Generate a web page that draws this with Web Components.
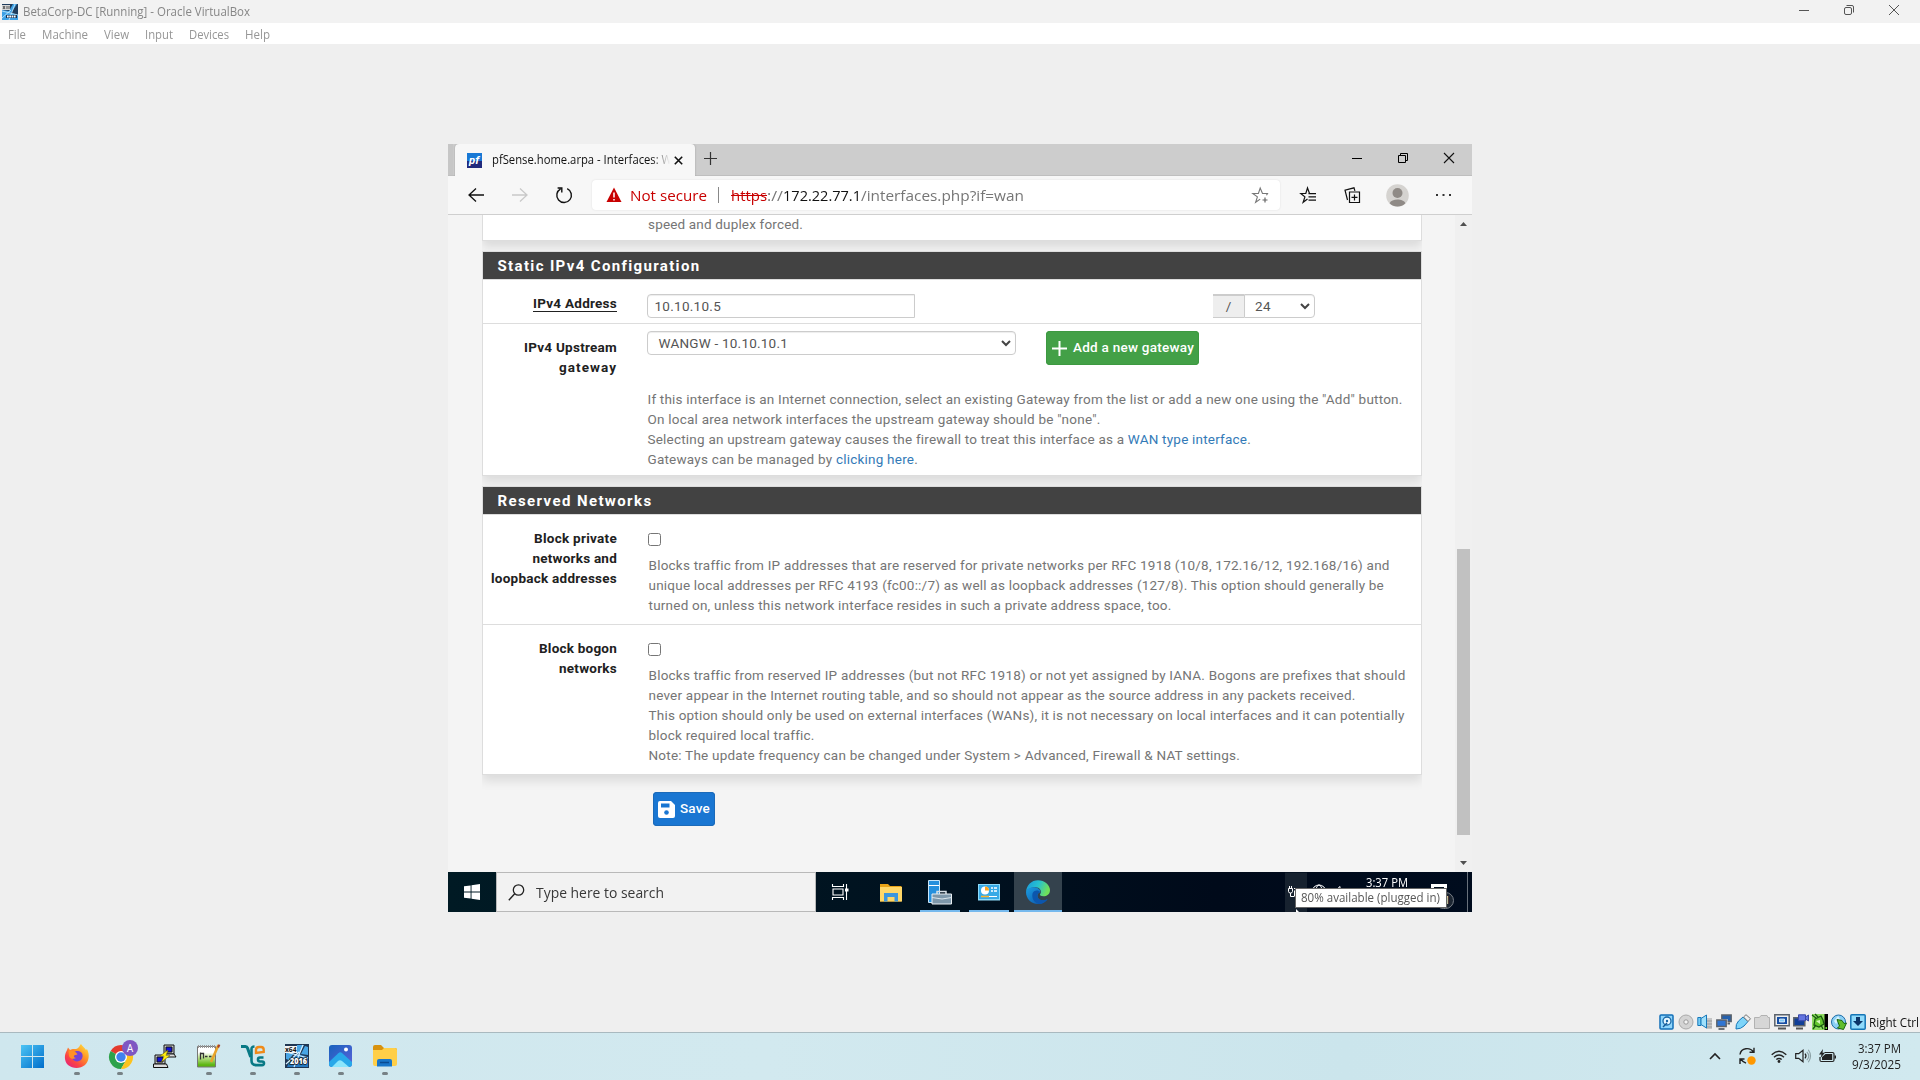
<!DOCTYPE html>
<html lang="en">
<head>
<meta charset="utf-8">
<title>BetaCorp-DC [Running] - Oracle VirtualBox</title>
<style>
html,body{margin:0;width:1920px;height:1080px;overflow:hidden;background:#efefef}
body{display:flex;flex-direction:column;font-family:"Open Sans","Noto Sans",sans-serif}
</style>
</head>
<body>
<vm-titlebar></vm-titlebar>
<vm-menubar></vm-menubar>
<vm-screen>
  <edge-window>
    <config-panel tail>
      <fit-text w="155">speed and duplex forced.</fit-text>
    </config-panel>
    <config-panel heading="Static IPv4 Configuration" hw="203">
      <form-row style="height:43px" divider>
        <fit-text slot="label" w="84" class="u">IPv4 Address</fit-text>
        <address-field></address-field>
      </form-row>
      <form-row style="height:151px">
        <fit-text slot="label" w="93">IPv4 Upstream</fit-text>
        <fit-text slot="label" w="58">gateway</fit-text>
        <gateway-field></gateway-field>
        <help-text>
          <fit-text w="755">If this interface is an Internet connection, select an existing Gateway from the list or add a new one using the "Add" button.</fit-text>
          <fit-text w="453">On local area network interfaces the upstream gateway should be "none".</fit-text>
          <fit-text w="603">Selecting an upstream gateway causes the firewall to treat this interface as a <a>WAN type interface</a>.</fit-text>
          <fit-text w="270.5">Gateways can be managed by <a>clicking here</a>.</fit-text>
        </help-text>
      </form-row>
    </config-panel>
    <config-panel heading="Reserved Networks" hw="155">
      <form-row style="height:109px" divider>
        <fit-text slot="label" w="83">Block private</fit-text>
        <fit-text slot="label" w="84.5">networks and</fit-text>
        <fit-text slot="label" w="126">loopback addresses</fit-text>
        <check-field></check-field>
        <help-text tight>
          <fit-text w="740">Blocks traffic from IP addresses that are reserved for private networks per RFC 1918 (10/8, 172.16/12, 192.168/16) and</fit-text>
          <fit-text w="735.5">unique local addresses per RFC 4193 (fc00::/7) as well as loopback addresses (127/8). This option should generally be</fit-text>
          <fit-text w="523">turned on, unless this network interface resides in such a private address space, too.</fit-text>
        </help-text>
      </form-row>
      <form-row style="height:149px">
        <fit-text slot="label" w="78">Block bogon</fit-text>
        <fit-text slot="label" w="58">networks</fit-text>
        <check-field></check-field>
        <help-text tight>
          <fit-text w="755.5">Blocks traffic from reserved IP addresses (but not RFC 1918) or not yet assigned by IANA. Bogons are prefixes that should</fit-text>
          <fit-text w="707">never appear in the Internet routing table, and so should not appear as the source address in any packets received.</fit-text>
          <fit-text w="756">This option should only be used on external interfaces (WANs), it is not necessary on local interfaces and it can potentially</fit-text>
          <fit-text w="165">block required local traffic.</fit-text>
          <fit-text w="591.5">Note: The update frequency can be changed under System &gt; Advanced, Firewall &amp; NAT settings.</fit-text>
        </help-text>
      </form-row>
    </config-panel>
    <action-button kind="save" icon="save" tw="30">Save</action-button>
  </edge-window>
  <guest-taskbar></guest-taskbar>
</vm-screen>
<vm-statusbar></vm-statusbar>
<host-taskbar></host-taskbar>

<script>
const define = (name, css, html, extra) => {
  customElements.define(name, class extends HTMLElement {
    constructor() {
      super();
      const t = document.createElement('template');
      t.innerHTML = '<style>*,:host{box-sizing:border-box}' + css + '</style>' + (typeof html === 'function' ? html(this) : html);
      this.attachShadow({mode: 'open'}).append(t.content.cloneNode(true));
    }
    connectedCallback() { if (extra) extra(this); }
  });
};

/* name: [viewBox width, viewBox height, markup] */
const ICONS = {
  min: [12,12,'<path d="M1 6.500h10" stroke="#555" fill="none"/>'],
  restore: [12,12,'<g stroke="#555" fill="none"><rect x="1.500" y="3.500" width="7" height="7" rx="1.500"/><path d="M3.500 1.500h5.500q1.500 0 1.500 1.500v5.500"/></g>'],
  close: [12,12,'<path d="M1 1l10 10M11 1L1 11" stroke="#555" fill="none"/>'],
  gmin: [12,12,'<path d="M1 6.500h10" stroke="#000"/>'],
  grestore: [12,12,'<g stroke="#000" fill="none"><path d="M1.500 3.500h7v7h-7zM3.500 3V1.500h7v7H9"/></g>'],
  gclose: [12,12,'<path d="M1 1l10 10M11 1L1 11" stroke="#111" stroke-width="1.100"/>'],
  tabx: [9,9,'<path d="M.8.8l7.400 7.400M8.200.8L.8 8.200" stroke="#111" stroke-width="1.600"/>'],
  plusthin: [13,13,'<path d="M6.500 0v13M0 6.500h13" stroke="#333" stroke-width="1.200"/>'],
  back: [18,16,'<path d="M9 1.500L2 8l7 6.500M2 8H17" fill="none" stroke="#111" stroke-width="1.300"/>'],
  fwd: [18,16,'<path d="M9 1.500L16 8l-7 6.500M16 8H1" fill="none" stroke="#c9c9c9" stroke-width="1.300"/>'],
  reload: [18,18,'<path d="M12.200 2.600a7.300 7.300 0 1 1-6.600.2M2.600 2h4.200v4.400" fill="none" stroke="#111" stroke-width="1.400"/>'],
  warn: [16,16,'<path d="M8 .5L15.500 15H.5z" fill="#c80000"/><path d="M8 5.500v5M8 12v1.600" stroke="#fff" stroke-width="1.500"/>'],
  staradd: [17,17,'<path d="M14.500 8.200l1-1.700h-5L8.200 1 6.400 6.500H.8l4.600 3.400-1.800 5.400 4.600-3.200" fill="none" stroke="#777" stroke-width="1.100"/><path d="M13 10.500v5M10.500 13h5" stroke="#666" stroke-width="1.200"/>'],
  starlist: [17,17,'<path d="M10 6.500H9.500L7.500 1 5.800 6.500H.8l4.100 3.400-1.800 5.400 4.400-3.200" fill="none" stroke="#111" stroke-width="1.200"/><path d="M8.500 6.700H16M8.500 9.900H16M8.500 13.100H16" stroke="#111" stroke-width="1.300"/>'],
  collect: [17,17,'<path d="M3.500 13L1 3.200 10 .8l.9 3" fill="none" stroke="#111" stroke-width="1.200"/><path d="M5.500 5h10v10.500h-10zM10.500 7.500v6M7.500 10.300h6" fill="none" stroke="#111" stroke-width="1.200"/>'],
  avatar: [23,23,'<circle cx="11.500" cy="11.500" r="11.300" fill="#d5d3d0"/><circle cx="11.500" cy="9" r="5" fill="#8f8a86"/><path d="M3.600 19.200c2-5 13.800-5 15.800 0a11.300 11.300 0 0 1-15.800 0z" fill="#8f8a86"/>'],
  dots: [15,4,'<path d="M0 1h2v2H0zM6.500 1h2v2h-2zM13 1h2v2h-2z" fill="#333"/>'],
  chev: [10,7,'<path d="M1 1l4 4 4-4" fill="none" stroke="#444" stroke-width="2"/>'],
  plus: [15,15,'<path d="M7.500 0v15M0 7.500h15" stroke="#fff" stroke-width="2"/>'],
  save: [17,17,'<path fill="#fff" d="M2 0h11l4 4v11q0 2-2 2H2q-2 0-2-2V2Q0 0 2 0z"/><path fill="#1976d2" d="M3 2.500h8.500V6.500H3z"/><circle cx="8.500" cy="11.500" r="2.300" fill="#1976d2"/>'],
  gstart: [16,16,'<path fill="#fff" d="M0 2.300L6.600 1.400V7.600H0zM7.500 1.300L16 0v7.600H7.500zM0 8.400h6.600v6.200L0 13.700zM7.500 8.400H16V16l-8.500-1.300z"/>'],
  search: [17,17,'<circle cx="10.500" cy="6" r="5.200" fill="none" stroke="#222" stroke-width="1.300"/><path d="M6.700 9.800L.8 16.200" stroke="#222" stroke-width="1.400"/>'],
  taskview: [17,16,'<path d="M.5 0v2.500h11V0M.5 16v-2.500h11V16M1 5h10v6H1zM14.500 0v16" fill="none" stroke="#fff" stroke-width="1.100"/><path d="M13 4.500h3.500v3H13z" fill="#fff"/>'],
  folder: [22,19,'<path d="M0 1h8l2 2h11.500v15.500H0z" fill="#e8a317"/><path d="M0 4h22v14.500H0z" fill="#ffd768"/><path d="M4 18.500V10h14v8.500h-3.500V14H7.500v4.500z" fill="#3c96dd"/>'],
  server: [24,25,'<path d="M.5.500h11v22H.5z" fill="#2590dd" stroke="#c8e6fa"/><path d="M1 5.500h10" stroke="#fff"/><path d="M9 14V11.500h9V14" fill="none" stroke="#d6dee5" stroke-width="1.500"/><path d="M4 14h19.500v10H4z" fill="#7e98ab" stroke="#e8eef2"/><path d="M4 17.500l10 1.500 9.500-1.500" fill="none" stroke="#dce6ec"/>'],
  cpanel: [22,17,'<path d="M0 0h22v16.500H0z" fill="#8ddaf8"/><path d="M1 1h20v14H1z" fill="#38aae6"/><circle cx="7" cy="6.500" r="4" fill="#fff"/><path d="M7 6.500V2.500a4 4 0 0 1 4 4z" fill="#ffa51f"/><path d="M13 4h2M16 4h3M13 7h2M16 7h3" stroke="#fff" stroke-width="1.500"/><path d="M3 12.500h16" stroke="#fff"/><path d="M3 12.500h8" stroke="#ffb52c" stroke-width="1.500"/>'],
  edge: [24,24,'<defs><linearGradient id="a" x1="0" y1="0" x2="1" y2=".3"><stop offset="0" stop-color="#1897df"/><stop offset=".55" stop-color="#27c2cf"/><stop offset="1" stop-color="#6fe05a"/></linearGradient><linearGradient id="b" x1="0" y1="0" x2="1" y2="1"><stop offset="0" stop-color="#1b9de2"/><stop offset="1" stop-color="#0b4fa5"/></linearGradient></defs><path d="M0 12C.5 5 5.500.2 12 .2S24 5 24 10c0 4.500-3.500 6.300-6.500 6.300-3 0-4.200-1-3.300-2.200 2.300-3.300-.9-6.900-4.500-6.900C5 7.200 1 9 0 12z" fill="url(#a)"/><path d="M0 12c.5-3 4-5 8.500-4.800 3.300.2 6.500 2.500 5.800 5-2 .3-3.200 2-2.800 4.200.8 3.800 5.700 5 10 2.800A12 12 0 0 1 12 24C5 24 0 18.500 0 12z" fill="url(#b)"/><path d="M6.500 13.500C5.500 18 8 22.500 12.500 24c4 .2 7.500-2 9.200-5-4 2.300-9.400 1.300-10.200-2.600-.4-2.200.8-3.900 2.800-4.200-2.500-2.800-6.800-1.700-7.800 1.300z" fill="#0c56ad"/>'],
  plug: [14,14,'<path d="M2.500 1v2.500M4.500 1v2.500M1.500 3.500h4v3q0 1.500-2 1.500t-2-1.500zM3.500 8v3.500H7M7 3.500h6" fill="none" stroke="#fff"/><path d="M7 5.500h6.500v6H7z" fill="#fff"/>'],
  globe: [16,16,'<g fill="none" stroke="#fff"><circle cx="8" cy="8" r="7"/><ellipse cx="8" cy="8" rx="3.200" ry="7"/><path d="M1.500 5.500h13M1.500 10.500h13"/></g>'],
  gvol: [14,14,'<path d="M1 5h3l4-3.500v11L4 9H1z" fill="none" stroke="#fff"/>'],
  note: [16,16,'<path d="M0 0h16v13h-5v3l-3-3H0z" fill="#fff"/><path d="M3 3.500h10M3 6h10" stroke="#031020"/>'],
  win11: [23,23,'<defs><linearGradient id="w" x1="0" y1="0" x2="1" y2="1"><stop offset="0" stop-color="#4cc4f4"/><stop offset="1" stop-color="#006ecb"/></linearGradient></defs><path fill="url(#w)" d="M0 0h11v11H0zM12 0h11v11H12zM0 12h11v11H0zM12 12h11v11H12z"/>'],
  firefox: [24,24,'<defs><linearGradient id="f" x1="1" y1="0" x2=".2" y2="1"><stop offset="0" stop-color="#fff04a"/><stop offset=".4" stop-color="#ff9a25"/><stop offset=".75" stop-color="#fb4444"/><stop offset="1" stop-color="#e5237c"/></linearGradient></defs><path d="M16 0c1 2 4 4 5 6l1-1c3 6 2 12-2 16-5 4-12 4-17 0C-1 17-.8 11 1.800 6.500L3 3.500l2 2.500C7 4.800 8.300 5 9.500 5c1 .2 3-.2 4-1.500C14.500 2.500 15 1 16 0z" fill="url(#f)"/><path d="M7 12c0-3 3-5.500 6-5 3.500.3 5 3 4.500 6-.6 3-3 4.500-5.500 4.400-3 0-5-2-5-5.400z" fill="#7543d5"/><path d="M3.500 6.500C7 5.500 9 7 11 8.500l1.500 1.700c-1 .8-3 .6-3.500 1.500-.5 1.200.5 2.300 2 2.300-2 1.500-6 1-7-2z" fill="#ff9026"/>'],
  chrome: [29,29,'<circle cx="12" cy="17" r="12" fill="#e6e6e6"/><path d="M12 17L1.600 11A12 12 0 0 1 22.400 11H12z" fill="#e33b2e"/><path d="M12 17L1.600 11A12 12 0 0 0 12 29l5.200-9z" fill="#2da24c"/><path d="M12 11h10.400A12 12 0 0 1 12 29l5.200-9z" fill="#fcc31e"/><circle cx="12" cy="17" r="6" fill="#fff"/><circle cx="12" cy="17" r="4.700" fill="#3f82ee"/><circle cx="21" cy="8" r="8" fill="#7e57c2"/><text x="21" y="11.500" font-size="10" font-family="Roboto" fill="#fff" text-anchor="middle">A</text>'],
  putty: [24,24,'<g stroke="#111" stroke-width="1"><path d="M11 1h10v9H11z" fill="#c9c9c9"/><path d="M13 3h6v5h-6z" fill="#1010d8"/><path d="M10 10h11l2 3H11z" fill="#ddd"/><path d="M2 11h10v9H2z" fill="#c9c9c9"/><path d="M4 13h6v5H4z" fill="#1010d8"/><path d="M.5 20h13l1.500 3.500H.5z" fill="#ddd"/></g><path d="M15 6l-8 6h4l-2.500 6L17 11.500h-4z" fill="#ffee10" stroke="#665f00" stroke-width=".5"/>'],
  npp: [24,24,'<defs><linearGradient id="n" x1="0" y1="0" x2="0" y2="1"><stop offset=".3" stop-color="#fff"/><stop offset=".5" stop-color="#c6e69a"/><stop offset=".9" stop-color="#5cb512"/></linearGradient></defs><path d="M.5 2.500h18v20.500H.5z" fill="url(#n)" stroke="#777"/><path d="M1 2.500h17" stroke="#999" stroke-width="3" stroke-dasharray="1 1"/><path d="M3.500 8.500v7M3.500 9.500h3v5M8 12.500h2.500M12 12.500h2.500" stroke="#333" stroke-width="1.300" fill="none"/><path d="M21.500 1L14 18" stroke="#e9a42a" stroke-width="2.600"/><path d="M21.500.2l1.800.8-1.300 3-2-1z" fill="#a8432c"/>'],
  vbapp: [24,22,'<path d="M0 1.500h4.500q1.500 0 2 1.500l3.200 9" fill="none" stroke="#087985" stroke-width="3"/><path d="M22.500 12.500h-3.500q-2 0-2 2t2 2h2q2 0 2 1.800t-2 1.800H15q-4.500 0-4.500-4.500V4q0-2.500 3-2.500" fill="none" stroke="#087985" stroke-width="2.600"/><path d="M15 8V4.800q0-2.800 3-2.800h2q2.700 0 2.700 2.800V7z" fill="none" stroke="#f08a18" stroke-width="2.400"/>'],
  x64: [24,24,'<path d="M0 0h24v24H0z" fill="#1f3652"/><path d="M1 7l8 2-5 7-3-1zM12 1h7l-5 9-4-2zM20 2l3 1v8l-7-1z" fill="#48a5e5"/><path d="M2 23l4-9 8-4 9 3v10z" fill="#2779bf"/><path d="M1 8l22 6M18 1L9 23M1 20L14 8" stroke="#d7f0ff" stroke-width="1.200"/><path d="M0 2h12v7H0z" fill="#f3f3f3"/><text x="0" y="8.200" font-size="7" font-weight="700" font-family="Open Sans" fill="#111" textLength="11.500" lengthAdjust="spacingAndGlyphs">x64</text><text x="5" y="20" font-size="8" font-weight="800" font-family="Open Sans" fill="#fff" stroke="#101820" stroke-width="1.600" paint-order="stroke" textLength="17" lengthAdjust="spacingAndGlyphs">2016</text>'],
  x64s: [16,16,'<path d="M0 0h16v16H0z" fill="#203d5d"/><path d="M0 6l7 1 4-7h4L9 9l7 2v5H0z" fill="#3da0e5"/><path d="M0 7l16 4M13 0L7 16M0 14l9-8" stroke="#c7edff" stroke-width=".8"/><path d="M0 1h8v5H0z" fill="#d7d7d7"/><path d="M1 2l2 3M3 2L1 5M5 2v3M7 2v3" stroke="#333" stroke-width=".8"/><path d="M4 11h11v3H4z" fill="#14304f"/><path d="M5 12.500h9" stroke="#fff" stroke-width="2.200" stroke-dasharray="1.700 .6"/>'],
  photos: [23,22,'<defs><linearGradient id="p" x1="0" y1="0" x2="1" y2="1"><stop offset="0" stop-color="#1762bd"/><stop offset="1" stop-color="#5c62da"/></linearGradient></defs><rect width="23" height="22" rx="3" fill="url(#p)"/><path d="M0 17L9.300 8.200q2-1.700 4 0L23 17v3q-.5 2-3 2H3q-2.500 0-3-2z" fill="#28a8e9"/><path d="M3 22l6-6q2-1.500 4 0l7 6z" fill="#8be6fc"/><circle cx="17" cy="4.500" r="2" fill="#fff"/>'],
  explorer: [24,22,'<path d="M0 2q0-2 2-2h6l3 3h11q2 0 2 2v3H0z" fill="#d8920e"/><path d="M0 5h9l2-2h11q2 0 2 2v14q0 2-2 2H2q-2 0-2-2z" fill="#ffcf48"/><path d="M4 21.500V16q0-2 2-2h11q2 0 2 2v5.500z" fill="#1976c9"/><path d="M7 17.500h9" stroke="#094b91" stroke-width="1.500"/>'],
  caret: [12,8,'<path d="M1 7l5-5 5 5" fill="none" stroke="#222" stroke-width="1.600"/>'],
  sync: [17,18,'<path d="M1 7.500C2 .5 11 0 14.500 5M15 .800V5.300h-4.500M7 16.200Q4 15 1.500 12M1 17v-5h4.500" fill="none" stroke="#222" stroke-width="1.400"/><circle cx="12.500" cy="13.500" r="4.200" fill="#ff9800"/>'],
  wifi: [16,13,'<path d="M.7 4.700Q8-2 15.300 4.700M3 7.200q5-4.500 10 0M5.300 9.600q2.700-2.400 5.400 0" fill="none" stroke="#222" stroke-width="1.400"/><circle cx="8" cy="11.500" r="1.400" fill="#222"/>'],
  vol: [16,14,'<path d="M.7 4.700h3L8 1.200v11.600L3.700 9.300h-3z" fill="none" stroke="#222" stroke-width="1.200"/><path d="M10 4.700q2 2.300 0 4.600" fill="none" stroke="#222" stroke-width="1.200"/><path d="M11.800 2.800q4 4.200 0 8.400M13.300.8q4.500 6.200 0 12.400" fill="none" stroke="#8ca1a6" stroke-width="1.100"/>'],
  batt: [17,14,'<path d="M5.500 3.500h8q1.500 0 1.500 1.500v6q0 1.500-1.500 1.500H2.500Q1 12.500 1 11V8" fill="none" stroke="#222" stroke-width="1.200"/><path d="M6.500 5h6.700v6H3V8z" fill="#222"/><path d="M15.500 6.500H17v3h-1.500zM4 0L0 5.500h2.500L1.500 9 6 3.800H3.500z" fill="#222"/>'],
  hdd: [15,16,'<rect x="1" y="1" width="13" height="14" rx="1" fill="#8fd5fb" stroke="#126fb8" stroke-width="1.500"/><circle cx="8" cy="7" r="4" fill="#e8f8ff" stroke="#1765a5" stroke-width="1.300"/><circle cx="8" cy="7" r="1.200" fill="#1765a5"/><path d="M4 13l4-4" stroke="#145a98" stroke-width="1.500"/>'],
  disc: [16,16,'<circle cx="8" cy="8" r="7" fill="#d4d4d4" stroke="#aaa"/><circle cx="8" cy="8" r="2.200" fill="#f4f4f4" stroke="#999"/>'],
  audio: [16,16,'<path d="M9 4h6v11H9z" fill="#c6c6c6"/><path d="M10 7h5M10 10h5M10 13h5" stroke="#999"/><path d="M.8 3.500h3.200v8H.8z" fill="#75cdf7" stroke="#1878b9"/><path d="M4 4.500L9.500 1v13L4 10.500z" fill="#9fe0fb" stroke="#1878b9"/>'],
  net: [16,16,'<path d="M5.800 1h9.400v6.500H5.800z" fill="#2561ad" stroke="#5b626b" stroke-width="1.400"/><path d="M9 9.500h5" stroke="#5b626b" stroke-width="2"/><path d="M0 5h11.500v8.500H0z" fill="#efefef"/><path d="M.8 6h9.400v6.500H.8z" fill="#2f76d4" stroke="#5b626b" stroke-width="1.400"/><path d="M2.500 15h6" stroke="#5b626b" stroke-width="1.800"/>'],
  usb: [16,16,'<path d="M1 15q-.5-5 2.500-8L8 3l5 4.500-4 4.500q-3 3-8 3z" fill="#7dd4f9" stroke="#1878b9"/><path d="M8.500 3L11 .7l4.500 4L13 7.500z" fill="#eee" stroke="#777"/>'],
  share: [16,16,'<path d="M.5 3.500h5l1.500-2h6l1 2h1.500v11H.5z" fill="#d6d6d6" stroke="#b2b2b2"/>'],
  display: [16,16,'<path d="M.8.8h14.400v11H.8z" fill="#eee" stroke="#5b626b" stroke-width="1.500"/><path d="M3 3h10v7H3z" fill="#154ea4"/><path d="M5.500 5h5v3h-5z" fill="#83cbf6" stroke="#fff" stroke-width=".7"/><path d="M4 14.500h8" stroke="#555" stroke-width="2"/>'],
  record: [16,16,'<path d="M.8 3.800h11v8H.8z" fill="#113f97" stroke="#5b626b" stroke-width="1.500"/><path d="M3 14.500h7" stroke="#555" stroke-width="2"/><path d="M5.500.8h7v6h-7zM12.500 3L15.500 1v6l-3-2z" fill="#6374e0" stroke="#3848a8"/>'],
  cpu: [16,16,'<path d="M0 0h16v16H0z" fill="#8fdc62"/><path d="M0 1l4 3M3 0l3 3M1 15l3-4M11 15l-2-4M3 5l6-3 2 4 1 4-5 3-5-2z" fill="#62c52e" stroke="#16590d" stroke-width="1.300"/><path d="M4 7l4 3V6z" fill="#d8f7bd"/><path d="M12.500 0H16v16h-3.500z" fill="#000"/><path d="M13.500 13h1.500v2h-1.500z" fill="#69df38"/>'],
  mouse: [16,16,'<circle cx="7.500" cy="8" r="7" fill="#8bd0f5" stroke="#1d6ca8"/><path d="M3 7l4-5 2 3-4 5z" fill="#d6f2ff"/><path d="M6 5.500l5 1 2 3 2.500-.5-3 6.500-6-1.500 2-2z" fill="#61bd2e" stroke="#1a6512"/>'],
  hostkey: [16,16,'<rect x=".8" y=".8" width="14.400" height="14.400" rx="1" fill="#8fdafb" stroke="#1475b6" stroke-width="1.500"/><path d="M6 3h4v4h3l-5 5-5-5h3z" fill="#0b3569"/>'],
  up: [7,4,'<path d="M0 4l3.500-4L7 4z" fill="#505050"/>'],
  down: [7,4,'<path d="M0 0l3.500 4L7 0z" fill="#505050"/>'],
  pf: [16,16,'<defs><linearGradient id="k" x1="0" y1="0" x2="0" y2="1"><stop offset=".5" stop-color="#1878d5"/><stop offset=".5" stop-color="#212a7c"/></linearGradient></defs><path d="M0 0h16v16H0z" fill="url(#k)"/><text x="7.500" y="11.500" font-size="12" font-weight="700" font-style="italic" font-family="Roboto" fill="#fff" text-anchor="middle">pf</text>']
};
define('ui-icon', ':host{display:block;flex:none;line-height:0}svg{display:block;overflow:visible}', el => {
  const [w, h, m] = ICONS[el.getAttribute('name')];
  return `<svg width="${el.getAttribute('w') || w}" height="${el.getAttribute('h') || h}" viewBox="0 0 ${w} ${h}">${m}</svg>`;
});

define('vm-titlebar', `:host{display:flex;height:23px;flex:none;background:#f2f2f2;align-items:center;padding:0 20px 0 2px;color:#868686;font-size:12px}
fit-text{margin-left:5px;line-height:22px;height:22px}.c{margin-left:auto;display:flex;gap:33px;height:20px;align-items:center;align-self:flex-start}`,
`<ui-icon name="x64s"></ui-icon><fit-text scale w="227">BetaCorp-DC [Running] - Oracle VirtualBox</fit-text><div class="c"><ui-icon name="min"></ui-icon><ui-icon name="restore"></ui-icon><ui-icon name="close"></ui-icon></div>`);

define('vm-menubar', ':host{display:flex;flex:none;height:21px;background:#fff;color:#969696;font-size:12px;line-height:24px;padding-left:8px;gap:16px}',
'<fit-text scale w="18">File</fit-text><fit-text scale w="46">Machine</fit-text><fit-text scale w="25">View</fit-text><fit-text scale w="28">Input</fit-text><fit-text scale w="40">Devices</fit-text><fit-text scale w="25">Help</fit-text>');

define('vm-screen', ':host{display:flex;flex:none;flex-direction:column;width:1024px;height:768px;margin:100px 0 0 448px;background:#f4f4f4}', '<slot></slot>');

define('edge-window', `:host{display:flex;flex-direction:column;height:728px}
.strip{height:32px;background:#cdcdcd;display:flex;flex:none;padding-left:7px;box-shadow:inset 0 -1px #bfbfbf,inset 5px 0 #c6c6c6;font-size:12px;color:#111}
.tab{width:240px;background:#f7f7f7;border-radius:4px 4px 0 0;display:flex;align-items:center;padding:0 12px;box-shadow:0 0 2px #999;clip-path:inset(0 -2px 0 -2px)}
.tab .t{margin-left:10px;flex:none;width:181px;height:20px;line-height:19px;-webkit-mask:linear-gradient(90deg,#000 160px,transparent 178px);mask:linear-gradient(90deg,#000 160px,transparent 178px)}
.tab ui-icon:last-child{margin-left:1px}
.add{margin:8px 0 0 9px}.wc{margin:8px 17px 0 auto;display:flex;gap:34px}
.bar{height:39px;flex:none;background:#f7f7f7;border-bottom:1px solid #cfcfcf;display:flex;align-items:center;padding-left:19px}
.addr{width:688px;height:30px;margin-left:19px;background:#fff;border-radius:4px;box-shadow:0 0 2px #ddd;display:flex;align-items:center;padding-left:14px;font-size:15px;line-height:29px}
.sep{width:1px;height:16px;background:#888;margin:0 12px 0 11px}
.r{color:#c80000}.g{color:#767676}.k{color:#111}s{color:#c80000}
.view{flex:1;min-height:0;display:flex}
.page{width:1007px;background:#f4f4f4;padding-left:34px;color:#757575;font:13.500px/20px Roboto,sans-serif}
.col{width:940px;height:657px;overflow:hidden;display:flex;flex-direction:column}
.sb{width:17px;background:#f0f0f0;display:flex;flex-direction:column;align-items:center;padding:7px 0}
.th{width:13px;height:286px;background:#c1c1c1;margin:323px 0 26px}`,
`<div class="strip"><div class="tab"><ui-icon name="pf" w="15" h="15"></ui-icon><div class="t"><fit-text scale w="180">pfSense.home.arpa - Interfaces: W</fit-text></div><ui-icon name="tabx"></ui-icon></div><ui-icon class="add" name="plusthin"></ui-icon><div class="wc"><ui-icon name="gmin"></ui-icon><ui-icon name="grestore"></ui-icon><ui-icon name="gclose"></ui-icon></div></div>
<div class="bar"><ui-icon name="back"></ui-icon><ui-icon name="fwd" style="margin-left:26px"></ui-icon><ui-icon name="reload" style="margin-left:26px"></ui-icon>
<div class="addr"><ui-icon name="warn"></ui-icon><fit-text scale w="77" class="r" style="margin-left:8px">Not secure</fit-text><div class="sep"></div><fit-text scale w="36"><s>https</s></fit-text><fit-text scale w="16" class="g">://</fit-text><fit-text scale w="78" class="k">172.22.77.1</fit-text><fit-text scale w="163" class="g">/interfaces.php?if=wan</fit-text><ui-icon name="staradd" style="margin:0 11px 0 auto"></ui-icon></div>
<ui-icon name="starlist" style="margin-left:20px"></ui-icon><ui-icon name="collect" style="margin-left:27px"></ui-icon><ui-icon name="avatar" style="margin-left:25px"></ui-icon><ui-icon name="dots" style="margin-left:27px"></ui-icon></div>
<div class="view"><div class="page"><div class="col"><slot></slot></div></div><div class="sb"><ui-icon name="up"></ui-icon><div class="th"></div><ui-icon name="down"></ui-icon></div></div>`);

define('config-panel', `:host{display:block;flex:none;width:940px;margin-bottom:10px;background:#fff;border:1px solid #ddd;box-shadow:0 6px 10px rgba(0,0,0,.1)}
:host([tail]){height:26px;border-top:0;padding:0 0 0 165px;line-height:19px}
h2{margin:0;height:28px;background:#424242;border-bottom:1px solid #ddd;color:#fff;font:700 15px/28px Roboto,sans-serif;letter-spacing:1px;padding-left:14.500px}`,
el => (el.hasAttribute('heading') ? `<h2><fit-text w="${el.getAttribute('hw')}">${el.getAttribute('heading')}</fit-text></h2>` : '') + '<slot></slot>');

define('form-row', `:host{display:grid;grid-template-columns:134px 1fr;column-gap:30px;box-sizing:content-box;align-items:start}
:host([divider]){border-bottom:1px solid #ddd}
.l{padding-top:13px;display:flex;flex-direction:column;align-items:flex-end;color:#212121;font-weight:700}`,
'<div class="l"><slot name="label"></slot></div><div><slot></slot></div>');

const ctl = '.f{border:1px solid #ccc;height:24px;background:#fff;box-shadow:inset 0 1px 1px rgba(0,0,0,.075);color:#555;line-height:23px;display:flex;align-items:center}';
define('address-field', `:host{display:flex;padding-top:14px}${ctl}.i{width:268px;border-radius:4px 0 0 4px;padding-left:6.500px}
.s{width:31px;margin-left:298px;background:#eee;border-right:0;border-left:0;justify-content:center;box-shadow:inset 0 1px #ccc}.n{width:71px;border-radius:0 4px 4px 0;padding:0 4px 0 10px;justify-content:space-between}`,
'<div class="f i"><fit-text w="66.500">10.10.10.5</fit-text></div><div class="f s">/</div><div class="f n"><fit-text w="16">24</fit-text><ui-icon name="chev"></ui-icon></div>');

define('gateway-field', `:host{display:flex;padding-top:7px}${ctl}.f{width:369px;border-radius:4px;padding:0 4px 0 10.500px;justify-content:space-between;margin-right:30px}`,
'<div class="f"><fit-text w="129.500">WANGW - 10.10.10.1</fit-text><ui-icon name="chev"></ui-icon></div><action-button icon="plus" tw="121">Add a new gateway</action-button>');

define('action-button', `:host{display:inline-flex;align-items:center;flex:none;align-self:flex-start;height:34px;border-radius:4px;padding:0 5px 0 6px;gap:6px;background:#43a047;box-shadow:inset 0 0 0 1px #3d9941;color:#fff;font-weight:500;line-height:31px}
fit-text{height:33px}
:host([kind=save]){background:#1976d2;box-shadow:inset 0 0 0 1px #1b6ab9;margin:7px 0 0 171px;padding:0 5px;gap:5px}`,
el => `<ui-icon name="${el.getAttribute('icon')}"></ui-icon><fit-text w="${el.getAttribute('tw')}"><slot></slot></fit-text>`);

define('help-text', ':host{display:flex;flex-direction:column;padding:24px 0 0 .5px}:host([tight]){padding:9px 0 0 1.5px}::slotted(*){white-space:nowrap}', '<slot></slot>');

define('check-field', ':host{display:block;padding:18px 0 0 1px}i{display:block;width:13px;height:13px;border:1px solid #767676;border-radius:2.500px;background:#fff}', '<i></i>');

define('guest-taskbar', `:host{display:flex;position:relative;height:40px;background:linear-gradient(90deg,#001a24,#00111f 50%,#000a1a 75%,#000c1e);color:#fff;font-size:12px}
.st{width:48px;display:flex;align-items:center;justify-content:center}
.se{width:320px;background:#f2f2f2;border:1px solid #b9b9b9;display:flex;align-items:center;padding-left:11px;gap:11px;color:#383838;font-size:15px;line-height:38px}
.ap{display:flex}.ap div{width:49px;display:flex;align-items:center;justify-content:center;border-bottom:2px solid transparent;padding-top:2px}
.ap .on{border-color:#76b9ed;width:40px;margin:0 5px 0 4px}.ap .act{background:#34424d;border-color:#76b9ed;width:48px}
.tr{margin-left:auto;display:flex;padding-right:20px}.tr .pw{width:22px;margin-right:4px;background:#17222f;display:flex;padding:12px 0 0 2px;border-top:1px solid #071322}
.tip{position:absolute;left:847px;top:16px;width:152px;height:20px;background:#fff;border:1px solid #666;color:#575757;line-height:18px;padding-left:5px}
.bd{position:absolute;left:987px;top:20px;width:19px;height:17px;border-radius:9px;border:1px solid #7a8088;background:#1c2632;text-align:right;padding-right:3px;font-size:10px;line-height:14px}
.sd{position:absolute;right:4px;top:0;width:1px;height:40px;background:#68717b}
.cu{position:absolute;left:847px;top:36px}`,
`<div class="st"><ui-icon name="gstart"></ui-icon></div><div class="se"><ui-icon name="search"></ui-icon><fit-text scale w="128">Type here to search</fit-text></div>
<div class="ap"><div><ui-icon name="taskview"></ui-icon></div><div style="width:51px"><ui-icon name="folder"></ui-icon></div><div class="on"><ui-icon name="server"></ui-icon></div><div class="on"><ui-icon name="cpanel"></ui-icon></div><div class="act"><ui-icon name="edge"></ui-icon></div></div>
<div class="tr"><div class="pw"><ui-icon name="plug"></ui-icon></div><ui-icon name="globe" style="margin-top:12px"></ui-icon><ui-icon name="gvol" style="margin:13px 27px 0 5px"></ui-icon><fit-text scale w="42" style="height:18px;line-height:21px;margin-right:23px;margin-left:-7px">3:37 PM</fit-text><ui-icon name="note" style="margin-top:12px;margin-right:5px"></ui-icon></div>
<div class="bd">1</div><div class="tip"><fit-text scale w="139">80% available (plugged in)</fit-text></div><svg class="cu" width="5" height="4"><path d="M1 1v3h3z" fill="#fff"/></svg><div class="sd"></div>`);

define('vm-statusbar', ':host{display:flex;height:20px;margin-top:auto;flex:none;justify-content:flex-end;align-items:center;gap:3.200px;padding:0 1px 0 0;color:#111;font-size:12px;line-height:19px}fit-text{margin-left:-.5px}',
['hdd','disc','audio','net','usb','share','display','record','cpu','mouse','hostkey'].map(n => `<ui-icon name="${n}"></ui-icon>`).join('') + '<fit-text scale w="50">Right Ctrl</fit-text>');

define('host-taskbar', `:host{display:flex;flex:none;height:48px;background:linear-gradient(90deg,#cfe7ee,#d2e9ef 40%,#cbe5ec 70%,#d1e9ef);border-top:1px solid #a9b9bf;padding:0 19px 0 10.500px;color:#222;font-size:12px}
.a{width:44px;display:flex;flex-direction:column;align-items:center;justify-content:center;position:relative}
.a i{position:absolute;bottom:5px;width:6px;height:3px;border-radius:2px;background:#778185}
.t{margin-left:auto;display:flex;align-items:center}.t ui-icon{margin-bottom:1px}.c{margin-left:16px;display:flex;flex-direction:column;align-items:flex-end;line-height:16px}`,
['win11','firefox','chrome','putty','npp','vbapp','x64','photos','explorer'].map((n, k) => `<div class="a"${n === 'chrome' ? ' style="padding:0 0 5px 5px;width:44px"' : ' style="padding-bottom:1px"'}><ui-icon name="${n}"></ui-icon>${k && k !== 3 ? `<i${n === 'chrome' ? ' style="left:18px"' : ''}></i>` : ''}</div>`).join('') +
`<div class="t"><ui-icon name="caret"></ui-icon><ui-icon name="sync" style="margin-left:18px"></ui-icon><ui-icon name="wifi" style="margin-left:15px"></ui-icon><ui-icon name="vol" style="margin-left:8px"></ui-icon><ui-icon name="batt" style="margin-left:8px"></ui-icon><div class="c"><fit-text scale w="43">3:37 PM</fit-text><fit-text scale w="49">9/3/2025</fit-text></div></div>`);

/* Sets its text to an exact width: by tracking, or by horizontal scale with the "scale" attribute. */
define('fit-text', ':host{display:block;flex:none;white-space:nowrap}span{display:inline-block;transform-origin:0 50%;vertical-align:top}::slotted(a){color:#337ab7}:host(.u) span{text-decoration:underline;text-decoration-thickness:1px;text-underline-offset:3px;text-decoration-skip-ink:none}', '<span><slot></slot></span>', el => {
  const s = el.shadowRoot.querySelector('span');
  const want = parseFloat(el.getAttribute('w'));
  const have = s.getBoundingClientRect().width;
  el.style.width = want + 'px';
  if (!have) return;
  if (el.hasAttribute('scale')) s.style.transform = `scaleX(${want / have})`;
  else {
    const base = parseFloat(getComputedStyle(s).letterSpacing) || 0;
    s.style.letterSpacing = base + (want - have) / Math.max(1, el.textContent.trim().length || (el.getRootNode().host?.textContent.trim().length)) + 'px';
  }
});
</script>
</body>
</html>
